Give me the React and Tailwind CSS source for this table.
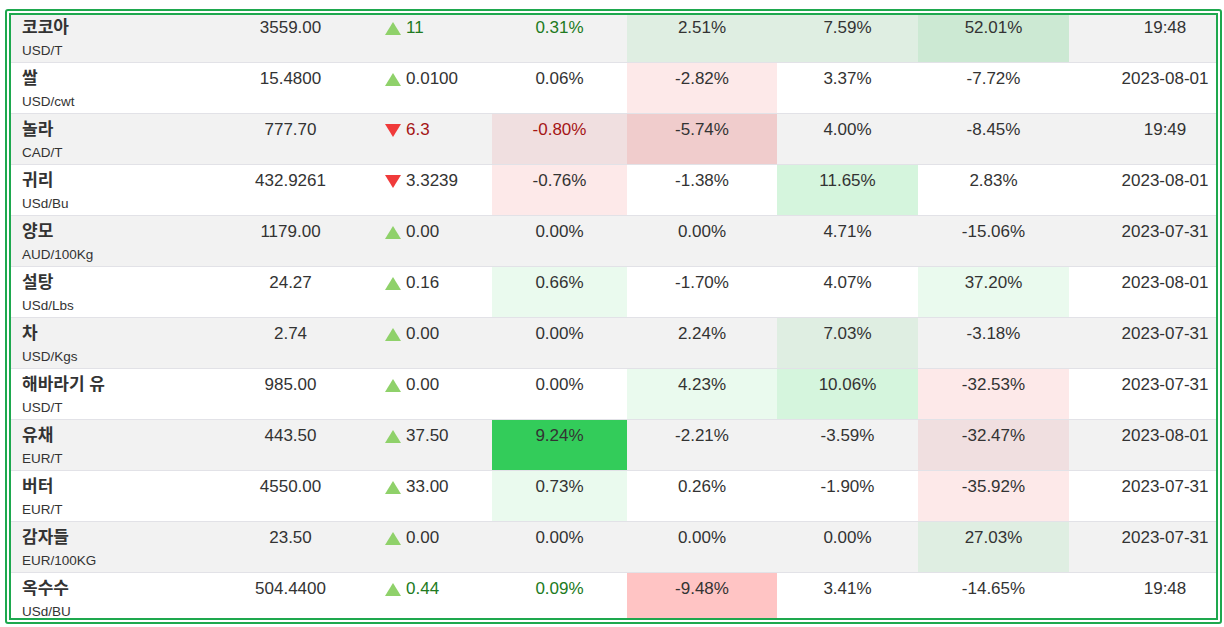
const rows = [
  { name: '코코아', unit: 'USD/T', price: '3559.00', dir: 'up', chg: '11', d: '0.31%', w: '2.51%', m: '7.59%', y: '52.01%', time: '19:48', tone: 'green', bg: ['', 'bg-[#dfeee2]', 'bg-[#dfeee2]', 'bg-[#cce9d3]'] },
  { name: '쌀', unit: 'USD/cwt', price: '15.4800', dir: 'up', chg: '0.0100', d: '0.06%', w: '-2.82%', m: '3.37%', y: '-7.72%', time: '2023-08-01', bg: ['', 'bg-[#fde9e9]', '', ''] },
  { name: '놀라', unit: 'CAD/T', price: '777.70', dir: 'down', chg: '6.3', d: '-0.80%', w: '-5.74%', m: '4.00%', y: '-8.45%', time: '19:49', tone: 'red', bg: ['bg-[#f0dfe0]', 'bg-[#f0cccc]', '', ''] },
  { name: '귀리', unit: 'USd/Bu', price: '432.9261', dir: 'down', chg: '3.3239', d: '-0.76%', w: '-1.38%', m: '11.65%', y: '2.83%', time: '2023-08-01', bg: ['bg-[#fde9e9]', '', 'bg-[#d5f5dd]', ''] },
  { name: '양모', unit: 'AUD/100Kg', price: '1179.00', dir: 'up', chg: '0.00', d: '0.00%', w: '0.00%', m: '4.71%', y: '-15.06%', time: '2023-07-31', bg: ['', '', '', ''] },
  { name: '설탕', unit: 'USd/Lbs', price: '24.27', dir: 'up', chg: '0.16', d: '0.66%', w: '-1.70%', m: '4.07%', y: '37.20%', time: '2023-08-01', bg: ['bg-[#eafaee]', '', '', 'bg-[#eafaee]'] },
  { name: '차', unit: 'USD/Kgs', price: '2.74', dir: 'up', chg: '0.00', d: '0.00%', w: '2.24%', m: '7.03%', y: '-3.18%', time: '2023-07-31', bg: ['', '', 'bg-[#dfeee2]', ''] },
  { name: '해바라기 유', unit: 'USD/T', price: '985.00', dir: 'up', chg: '0.00', d: '0.00%', w: '4.23%', m: '10.06%', y: '-32.53%', time: '2023-07-31', bg: ['', 'bg-[#eafaee]', 'bg-[#d5f5dd]', 'bg-[#fde9e9]'] },
  { name: '유채', unit: 'EUR/T', price: '443.50', dir: 'up', chg: '37.50', d: '9.24%', w: '-2.21%', m: '-3.59%', y: '-32.47%', time: '2023-08-01', bg: ['bg-[#33cc5a]', '', '', 'bg-[#f0dfe0]'] },
  { name: '버터', unit: 'EUR/T', price: '4550.00', dir: 'up', chg: '33.00', d: '0.73%', w: '0.26%', m: '-1.90%', y: '-35.92%', time: '2023-07-31', bg: ['bg-[#eafaee]', '', '', 'bg-[#fde9e9]'] },
  { name: '감자들', unit: 'EUR/100KG', price: '23.50', dir: 'up', chg: '0.00', d: '0.00%', w: '0.00%', m: '0.00%', y: '27.03%', time: '2023-07-31', bg: ['', '', '', 'bg-[#dfeee2]'] },
  { name: '옥수수', unit: 'USd/BU', price: '504.4400', dir: 'up', chg: '0.44', d: '0.09%', w: '-9.48%', m: '3.41%', y: '-14.65%', time: '19:48', tone: 'green', bg: ['', 'bg-[#ffc4c4]', '', ''] }
]

function Arrow({ dir }) {
  return dir === 'up' ? (
    <svg width="16" height="13" viewBox="0 0 16 13" className="shrink-0">
      <polygon points="8,0 16,13 0,13" fill="#8fd16a" />
    </svg>
  ) : (
    <svg width="16" height="13" viewBox="0 0 16 13" className="shrink-0">
      <polygon points="0,0 16,0 8,13" fill="#f03a3a" />
    </svg>
  )
}

function Row({ r, odd }) {
  const tone = r.tone === 'green' ? 'text-[#217a21]' : r.tone === 'red' ? 'text-[#a51515]' : 'text-[#333]'
  const cells = [r.d, r.w, r.m, r.y]
  return (
    <div
      className={`grid grid-cols-[210px_139px_132px_135px_150px_141px_151px_192px] h-[51px] border-b border-[#e2e2e7] ${
        odd ? 'bg-[#f2f2f2]' : 'bg-white'
      }`}
    >
      <div className="pl-[11px] pt-[6px]">
        <div className="text-[17px] leading-[20px] font-bold text-[#333]">{r.name}</div>
        <div className="text-[13.5px] leading-[17px] mt-[4px] text-[#333]">{r.unit}</div>
      </div>
      <div className="pt-[6px] text-center text-[17px] leading-[20px] text-[#333]">{r.price}</div>
      <div className="pt-[6px] pl-[25px] flex items-start">
        <div className="flex items-center gap-[5px] h-[20px]">
          <Arrow dir={r.dir} />
          <span className={`text-[17px] leading-[20px] ${tone}`}>{r.chg}</span>
        </div>
      </div>
      {cells.map((v, i) => (
        <div
          key={i}
          className={`pt-[6px] text-center text-[17px] leading-[20px] ${i === 0 ? tone : 'text-[#333]'} ${r.bg[i]}`}
        >
          {v}
        </div>
      ))}
      <div className="pt-[6px] text-center text-[17px] leading-[20px] text-[#333]">{r.time}</div>
    </div>
  )
}

export default function App() {
  return (
    <div className="w-[1224px] h-[627px] bg-white pl-[5px] pt-[9px] font-['Liberation_Sans','Noto_Sans_CJK_KR',sans-serif]">
      <div className="w-[1217px] h-[615px] border-[6px] border-double border-[#1ea84e] rounded-[3px] overflow-hidden">
        <div className="-mt-[3px]">
          {rows.map((r, i) => (
            <Row key={r.name} r={r} odd={i % 2 === 0} />
          ))}
        </div>
      </div>
    </div>
  )
}
